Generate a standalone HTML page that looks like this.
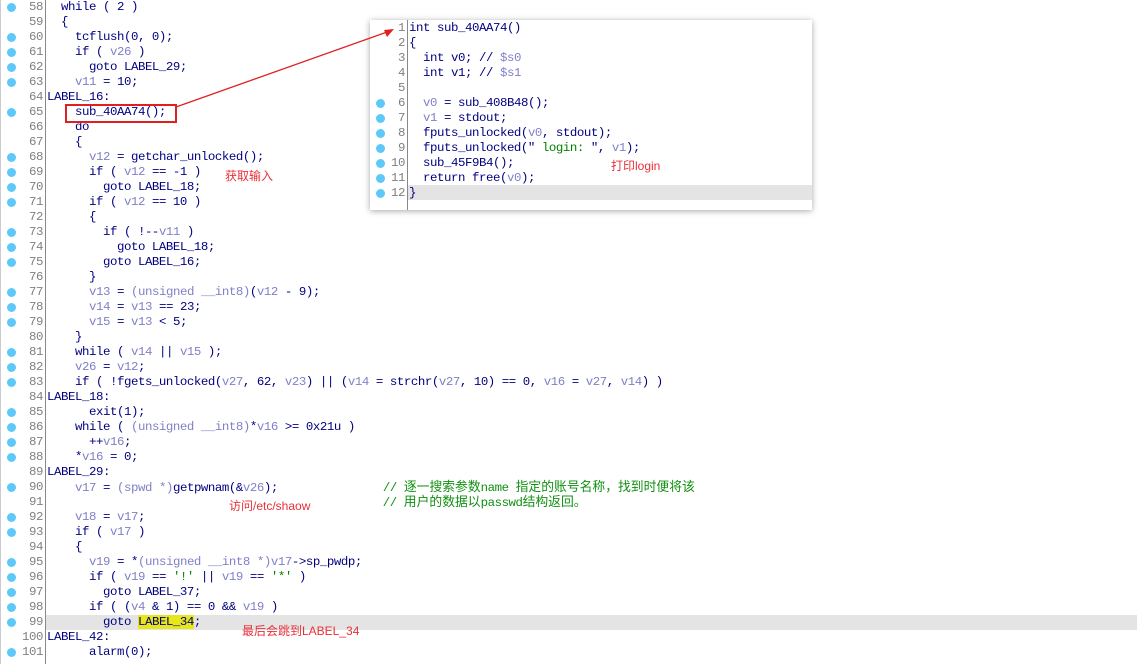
<!DOCTYPE html>
<html><head><meta charset="utf-8"><style>
body{margin:0;width:1137px;height:664px;background:#fff;position:relative;overflow:hidden;font-family:"Liberation Mono","Noto Sans CJK SC",monospace;font-size:12.4px;letter-spacing:-0.44px;color:#000080}
.r{position:absolute;left:0;height:15px;line-height:15px;white-space:pre}
.n{position:absolute;width:43px;text-align:right;color:#808080}
.t{position:absolute;left:47px}
.d{position:absolute;left:7px;top:3px;width:9px;height:9px;border-radius:50%;background:#5ec8f8}
.v{color:#8080c8}.s{color:#008000}.c{color:#109010}
.k{font-size:12.8px;letter-spacing:0}
.gut{position:absolute;left:45px;top:0;width:1px;height:664px;background:#888}
.hl{position:absolute;background:#e4e4e4}
.a{position:absolute;font-family:"Liberation Sans","Noto Sans CJK SC",sans-serif;font-size:12px;letter-spacing:0;color:#e8303a;white-space:nowrap}
.pop{position:absolute;left:370px;top:20px;width:442px;height:190px;background:#fff;box-shadow:0 1px 6px rgba(0,0,0,.35)}
.pop .n{width:35px}
.pop .t{left:39px}
.pop .d{left:6px}
</style></head><body>
<div style="position:absolute;left:0;top:0;width:1px;height:664px;background:#ccc"></div>
<div class="hl" style="left:46px;top:615px;width:1091px;height:15px"></div>
<div class="gut"></div>
<div class="r" style="top:0"><div class="d"></div><span class="n">58</span><span class="t">  while ( 2 )</span></div>
<div class="r" style="top:15px"><span class="n">59</span><span class="t">  {</span></div>
<div class="r" style="top:30px"><div class="d"></div><span class="n">60</span><span class="t">    tcflush(0, 0);</span></div>
<div class="r" style="top:45px"><div class="d"></div><span class="n">61</span><span class="t">    if ( <span class="v">v26</span> )</span></div>
<div class="r" style="top:60px"><div class="d"></div><span class="n">62</span><span class="t">      goto LABEL_29;</span></div>
<div class="r" style="top:75px"><div class="d"></div><span class="n">63</span><span class="t">    <span class="v">v11</span> = 10;</span></div>
<div class="r" style="top:90px"><span class="n">64</span><span class="t">LABEL_16:</span></div>
<div class="r" style="top:105px"><div class="d"></div><span class="n">65</span><span class="t">    sub_40AA74();</span></div>
<div class="r" style="top:120px"><span class="n">66</span><span class="t">    do</span></div>
<div class="r" style="top:135px"><span class="n">67</span><span class="t">    {</span></div>
<div class="r" style="top:150px"><div class="d"></div><span class="n">68</span><span class="t">      <span class="v">v12</span> = getchar_unlocked();</span></div>
<div class="r" style="top:165px"><div class="d"></div><span class="n">69</span><span class="t">      if ( <span class="v">v12</span> == -1 )</span></div>
<div class="r" style="top:180px"><div class="d"></div><span class="n">70</span><span class="t">        goto LABEL_18;</span></div>
<div class="r" style="top:195px"><div class="d"></div><span class="n">71</span><span class="t">      if ( <span class="v">v12</span> == 10 )</span></div>
<div class="r" style="top:210px"><span class="n">72</span><span class="t">      {</span></div>
<div class="r" style="top:225px"><div class="d"></div><span class="n">73</span><span class="t">        if ( !--<span class="v">v11</span> )</span></div>
<div class="r" style="top:240px"><div class="d"></div><span class="n">74</span><span class="t">          goto LABEL_18;</span></div>
<div class="r" style="top:255px"><div class="d"></div><span class="n">75</span><span class="t">        goto LABEL_16;</span></div>
<div class="r" style="top:270px"><span class="n">76</span><span class="t">      }</span></div>
<div class="r" style="top:285px"><div class="d"></div><span class="n">77</span><span class="t">      <span class="v">v13</span> = <span class="v">(unsigned __int8)</span>(<span class="v">v12</span> - 9);</span></div>
<div class="r" style="top:300px"><div class="d"></div><span class="n">78</span><span class="t">      <span class="v">v14</span> = <span class="v">v13</span> == 23;</span></div>
<div class="r" style="top:315px"><div class="d"></div><span class="n">79</span><span class="t">      <span class="v">v15</span> = <span class="v">v13</span> &lt; 5;</span></div>
<div class="r" style="top:330px"><span class="n">80</span><span class="t">    }</span></div>
<div class="r" style="top:345px"><div class="d"></div><span class="n">81</span><span class="t">    while ( <span class="v">v14</span> || <span class="v">v15</span> );</span></div>
<div class="r" style="top:360px"><div class="d"></div><span class="n">82</span><span class="t">    <span class="v">v26</span> = <span class="v">v12</span>;</span></div>
<div class="r" style="top:375px"><div class="d"></div><span class="n">83</span><span class="t">    if ( !fgets_unlocked(<span class="v">v27</span>, 62, <span class="v">v23</span>) || (<span class="v">v14</span> = strchr(<span class="v">v27</span>, 10) == 0, <span class="v">v16</span> = <span class="v">v27</span>, <span class="v">v14</span>) )</span></div>
<div class="r" style="top:390px"><span class="n">84</span><span class="t">LABEL_18:</span></div>
<div class="r" style="top:405px"><div class="d"></div><span class="n">85</span><span class="t">      exit(1);</span></div>
<div class="r" style="top:420px"><div class="d"></div><span class="n">86</span><span class="t">    while ( <span class="v">(unsigned __int8)</span>*<span class="v">v16</span> &gt;= 0x21u )</span></div>
<div class="r" style="top:435px"><div class="d"></div><span class="n">87</span><span class="t">      ++<span class="v">v16</span>;</span></div>
<div class="r" style="top:450px"><div class="d"></div><span class="n">88</span><span class="t">    *<span class="v">v16</span> = 0;</span></div>
<div class="r" style="top:465px"><span class="n">89</span><span class="t">LABEL_29:</span></div>
<div class="r" style="top:480px"><div class="d"></div><span class="n">90</span><span class="t">    <span class="v">v17</span> = <span class="v">(spwd *)</span>getpwnam(&amp;<span class="v">v26</span>);               <span class="c">// <span class="k">逐一搜索参数</span>name <span class="k">指定的账号名称，找到时便将该</span></span></span></div>
<div class="r" style="top:495px"><span class="n">91</span><span class="t">                                                <span class="c">// <span class="k">用户的数据以</span>passwd<span class="k">结构返回。</span></span></span></div>
<div class="r" style="top:510px"><div class="d"></div><span class="n">92</span><span class="t">    <span class="v">v18</span> = <span class="v">v17</span>;</span></div>
<div class="r" style="top:525px"><div class="d"></div><span class="n">93</span><span class="t">    if ( <span class="v">v17</span> )</span></div>
<div class="r" style="top:540px"><span class="n">94</span><span class="t">    {</span></div>
<div class="r" style="top:555px"><div class="d"></div><span class="n">95</span><span class="t">      <span class="v">v19</span> = *<span class="v">(unsigned __int8 *)</span><span class="v">v17</span>-&gt;sp_pwdp;</span></div>
<div class="r" style="top:570px"><div class="d"></div><span class="n">96</span><span class="t">      if ( <span class="v">v19</span> == <span class="s">'!'</span> || <span class="v">v19</span> == <span class="s">'*'</span> )</span></div>
<div class="r" style="top:585px"><div class="d"></div><span class="n">97</span><span class="t">        goto LABEL_37;</span></div>
<div class="r" style="top:600px"><div class="d"></div><span class="n">98</span><span class="t">      if ( (<span class="v">v4</span> &amp; 1) == 0 &amp;&amp; <span class="v">v19</span> )</span></div>
<div class="r" style="top:615px"><div class="d"></div><span class="n">99</span><span class="t">        goto <span style="background:#e6e61a">LABEL_34</span>;</span></div>
<div class="r" style="top:630px"><span class="n">100</span><span class="t">LABEL_42:</span></div>
<div class="r" style="top:645px"><div class="d"></div><span class="n">101</span><span class="t">      alarm(0);</span></div>

<div style="position:absolute;left:65px;top:104px;width:108px;height:15px;border:2px solid #e02020"></div>

<div class="pop">
<div class="hl" style="left:38px;top:165px;width:404px;height:15px"></div>
<div style="position:absolute;left:37px;top:0;width:1px;height:190px;background:#888"></div>
<div class="r" style="top:1px"><span class="n">1</span><span class="t">int sub_40AA74()</span></div>
<div class="r" style="top:16px"><span class="n">2</span><span class="t">{</span></div>
<div class="r" style="top:31px"><span class="n">3</span><span class="t">  int v0; // <span class="v">$s0</span></span></div>
<div class="r" style="top:46px"><span class="n">4</span><span class="t">  int v1; // <span class="v">$s1</span></span></div>
<div class="r" style="top:61px"><span class="n">5</span><span class="t"></span></div>
<div class="r" style="top:76px"><div class="d"></div><span class="n">6</span><span class="t">  <span class="v">v0</span> = sub_408B48();</span></div>
<div class="r" style="top:91px"><div class="d"></div><span class="n">7</span><span class="t">  <span class="v">v1</span> = stdout;</span></div>
<div class="r" style="top:106px"><div class="d"></div><span class="n">8</span><span class="t">  fputs_unlocked(<span class="v">v0</span>, stdout);</span></div>
<div class="r" style="top:121px"><div class="d"></div><span class="n">9</span><span class="t">  fputs_unlocked(" <span class="s">login: </span>", <span class="v">v1</span>);</span></div>
<div class="r" style="top:136px"><div class="d"></div><span class="n">10</span><span class="t">  sub_45F9B4();</span></div>
<div class="r" style="top:151px"><div class="d"></div><span class="n">11</span><span class="t">  return free(<span class="v">v0</span>);</span></div>
<div class="r" style="top:166px"><div class="d"></div><span class="n">12</span><span class="t">}</span></div>
</div>

<svg style="position:absolute;left:0;top:0" width="1137" height="664">
<line x1="176" y1="107" x2="390" y2="31" stroke="#e02020" stroke-width="1.3"/>
<polygon points="394,29 384,30 387,37" fill="#e02020"/>
</svg>
<div class="a" style="left:225px;top:167px">获取输入</div>
<div class="a" style="left:611px;top:157px">打印login</div>
<div class="a" style="left:229px;top:497px">访问/etc/shaow</div>
<div class="a" style="left:242px;top:622px">最后会跳到LABEL_34</div>
</body></html>
